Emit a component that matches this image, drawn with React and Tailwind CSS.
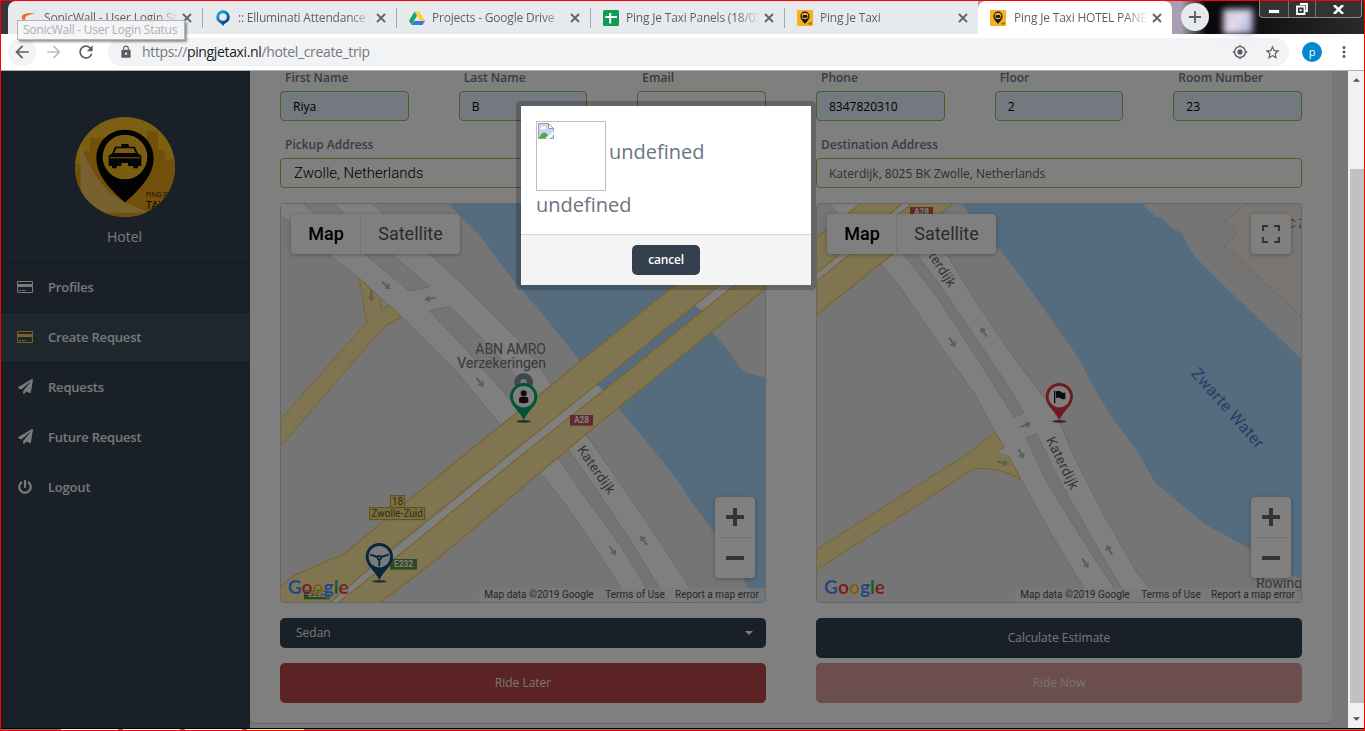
import React from "react";
import { FaPaperPlane, FaPowerOff } from "react-icons/fa";
import { MdLock, MdGpsFixed, MdStarBorder, MdMoreVert, MdArrowBack, MdArrowForward, MdRefresh } from "react-icons/md";

/* ---------- browser chrome ---------- */

function TaxiFavicon() {
  return (
    <svg viewBox="0 0 16 16" className="size-4 shrink-0">
      <rect width="16" height="16" rx="1" fill="#f4b223" />
      <path d="M8 1.6a4.6 4.6 0 0 0-4.6 4.6C3.400 9.500 8 13.800 8 13.800s4.600-4.300 4.600-7.600A4.600 4.600 0 0 0 8 1.600z" fill="#161616" />
      <circle cx="8" cy="6" r="3.300" fill="#f4b223" />
      <path d="M5.600 6.600l.7-1.600h3.400l.7 1.600v1.200H5.600z" fill="#161616" />
      <path d="M11.500 12.500h3.500v2h-3.500z" fill="#a8700d" />
    </svg>
  );
}

function SonicIcon() {
  return (
    <svg viewBox="0 0 16 16" className="size-4 shrink-0">
      <path d="M14.500 3.600C8.500 2.300 1 3.400.6 7c-.2 2.200 2.600 4 5 5-1.500-1.800-2-3.500-.9-4.900C6.200 5.200 10.500 4 14.500 3.600z" fill="#f3702a" />
    </svg>
  );
}

function BulbIcon() {
  return (
    <svg viewBox="0 0 16 16" className="size-4 shrink-0">
      <defs>
        <linearGradient id="bulb" x1="0" y1="0" x2="1" y2="1">
          <stop offset="0" stopColor="#19b3e6" />
          <stop offset="1" stopColor="#0b3f8f" />
        </linearGradient>
      </defs>
      <circle cx="8" cy="7" r="5.300" fill="none" stroke="url(#bulb)" strokeWidth="3" />
      <path d="M5 11.500h6L8 16z" fill="#0f4a9b" />
    </svg>
  );
}

function DriveIcon() {
  return (
    <svg viewBox="0 0 16 16" className="size-4 shrink-0">
      <path d="M5.500 1.500h5L16 11h-5.100z" fill="#ffcf48" />
      <path d="M5.500 1.500L0 11l2.600 4L8 5.700z" fill="#11a861" />
      <path d="M5.200 11H16l-2.600 4H2.600z" fill="#3777e3" />
    </svg>
  );
}

function SheetsIcon() {
  return (
    <svg viewBox="0 0 16 16" className="size-4 shrink-0">
      <rect width="16" height="16" rx="1.500" fill="#0f9d58" />
      <path d="M6.200 3h2v3H14v2H8.200v5.500h-2V8H2.300V6h3.900z" fill="#fff" />
    </svg>
  );
}

function CloseX() {
  return (
    <svg viewBox="0 0 10 10" className="size-[10px] shrink-0">
      <path d="M1 1l8 8M9 1l-8 8" stroke="#5f6368" strokeWidth="1.800" />
    </svg>
  );
}

const tabs = [
  { title: "SonicWall - User Login Status", icon: <SonicIcon />, first: true },
  { title: ":: Elluminati Attendance Po", icon: <BulbIcon /> },
  { title: "Projects - Google Drive", icon: <DriveIcon /> },
  { title: "Ping Je Taxi Panels (18/02/19)", icon: <SheetsIcon /> },
  { title: "Ping Je Taxi", icon: <TaxiFavicon /> },
  { title: "Ping Je Taxi HOTEL PANEL", icon: <TaxiFavicon />, active: true },
];

function Tab({ tab }) {
  return (
    <div
      className={
        tab.active
          ? "flex h-full w-[194px] items-center rounded-t-lg bg-white"
          : "flex h-full w-[194px] items-center bg-[#e7eaed] first:rounded-tl-lg"
      }
    >
      <div className={tab.active || tab.first ? "h-5 w-px" : "h-5 w-px bg-[#a4a7ab]"} />
      <div className={tab.active ? "ml-[11px]" : "ml-3"}>{tab.icon}</div>
      <div className={tab.active
        ? "ml-2 w-[132px] overflow-hidden whitespace-nowrap bg-[linear-gradient(90deg,#5a5d61_84%,transparent_102%)] bg-clip-text text-[12px] leading-5 tracking-[-0.2px] text-transparent"
        : "ml-[7px] w-[132px] overflow-hidden whitespace-nowrap bg-[linear-gradient(90deg,#5a5d61_84%,transparent_102%)] bg-clip-text text-[12px] leading-5 tracking-[-0.2px] text-transparent"}>
        {tab.title}
      </div>
      <div className="ml-[6px]"><CloseX /></div>
    </div>
  );
}

function TabStrip() {
  return (
    <div className="flex h-[33px] bg-[linear-gradient(90deg,#35353a_0_20px,#a99fb4_30px,#a99fb4_1180px,#0b0b0d_1205px,#08080a_1220px,#2a2a2c_1363px)] pl-[7px] font-['Open_Sans',sans-serif]">
      {tabs.map((t) => <Tab key={t.title} tab={t} />)}
      <div className="ml-[9px] mt-[2px] flex size-[28px] items-center justify-center rounded-full bg-[#e7eaed]">
        <svg viewBox="0 0 12 12" className="size-3"><path d="M6 0v12M0 6h12" stroke="#5a5d61" strokeWidth="1.800" /></svg>
      </div>
      <div className="ml-[14px] mt-2 h-[25px] w-[30px] bg-[linear-gradient(120deg,#cfc5dd,#e4dcee_50%,#98a0cf)] blur-[3px]" />
      <div className="ml-auto mr-[2px] flex h-[17px] w-[103px] rounded-b border border-t-0 border-[#8b8b8b] bg-[#333]">
        <div className="flex w-[29px] items-center justify-center border-r border-[#777]"><div className="mt-1 h-[5px] w-[12px] border border-[#444] bg-white" /></div>
        <div className="flex w-[27px] items-center justify-center border-r border-[#777]">
          <svg viewBox="0 0 12 12" className="size-3"><path d="M4 1h7v7H9M1 3.500h7.500V11H1z" fill="none" stroke="#fff" strokeWidth="1.800" /><path d="M3.600 6.200h2v2h-2z" fill="#fff" /></svg>
        </div>
        <div className="flex flex-1 items-center justify-center">
          <svg viewBox="0 0 12 10" className="h-[9px] w-[11px]"><path d="M1 0l10 10M11 0L1 10" stroke="#fff" strokeWidth="2.800" /></svg>
        </div>
      </div>
    </div>
  );
}

function Toolbar() {
  return (
    <div className="flex h-9 items-center bg-white pl-[7px] pr-[11px] font-['Open_Sans',sans-serif]">
      <div className="flex size-[28px] items-center justify-center rounded-full bg-[#f1f3f4]"><MdArrowBack className="size-5 text-[#5a5d61]" /></div>
      <MdArrowForward className="ml-2 size-5 text-[#bcbec0]" />
      <MdRefresh className="ml-3 size-5 text-[#5a5d61]" />
      <div className="ml-[12px] flex h-7 w-[1181px] items-center rounded-full bg-[#f1f3f4] pl-[11px] pr-2">
        <MdLock className="size-[14px] text-[#5a5d61]" />
        <div className="ml-[9px] text-[14px] leading-5 tracking-[-0.35px] text-[#75797e]">
          https://<span className="text-[#202124]">pingjetaxi.nl</span>/hotel_create_trip
        </div>
        <MdGpsFixed className="ml-auto size-4 text-[#5a5d61]" />
        <MdStarBorder className="ml-4 size-[17px] text-[#5a5d61]" />
      </div>
      <div className="ml-[13px] flex size-5 items-center justify-center rounded-full bg-[#0288d1] pb-px text-[11px] leading-none text-white">p</div>
      <MdMoreVert className="ml-auto size-[18px] text-[#5a5d61]" />
    </div>
  );
}

/* ---------- sidebar ---------- */

function CardIcon() {
  return (
    <svg viewBox="0 0 16 12" className="h-3 w-4">
      <path d="M.5.500h15v11H.5z" fill="none" stroke="currentColor" />
      <path d="M1 3h14v3H1zM2 9h2v1H2zM5 9h3.500v1H5z" fill="currentColor" />
    </svg>
  );
}

function Avatar() {
  return (
    <svg viewBox="225 141 300 300" className="mx-auto size-[100px] shrink-0">
      <defs><clipPath id="avatar"><circle cx="375" cy="291" r="150" /></clipPath></defs>
      <g clipPath="url(#avatar)">
        <path d="M225 141h300v300H225z" fill="#fbbf24" />
        <path d="M225 282h18v-40h27v-38h60v50h110v-70h34v57h21v27h35v173H225z" fill="#e2a018" />
        <path d="M375 179c-48 0-86 38-86 86 0 58 56 105 86 133 30-28 86-75 86-133 0-48-38-86-86-86z" fill="#050505" />
        <circle cx="375" cy="261" r="67" fill="#f4ba20" />
        <path d="M364 222h22v8h19l8 20 11 7v31h-10v7h-14v-7h-50v7h-14v-7h-10v-31l11-7 8-20h19z" fill="#0a0a0a" />
        <path d="M349 235h52l6 14h-64z" fill="#f4ba20" />
        <path d="M330 262h90v3h-90zM364 279h20v10h-20z" fill="#f4ba20" />
        <path d="M242 220c28 90 80 150 120 170l85 38H242z" fill="#fff2c0" opacity=".42" />
        <text x="437" y="381" fontSize="21" fontFamily="Open Sans" fill="#1a1408" textLength="68" lengthAdjust="spacingAndGlyphs">PING JE</text>
        <text x="437" y="416" fontSize="34" fontFamily="Open Sans" fill="#0d0a04" textLength="66">TAXI</text>
      </g>
    </svg>
  );
}

const nav = [
  { label: "Profiles", icon: <CardIcon /> },
  { label: "Create Request", icon: <CardIcon />, active: true },
  { label: "Requests", icon: <FaPaperPlane className="size-[15px]" /> },
  { label: "Future Request", icon: <FaPaperPlane className="size-[15px]" /> },
  { label: "Logout", icon: <FaPowerOff className="size-[14px]" /> },
];

function Sidebar() {
  return (
    <div className="flex w-[249px] shrink-0 flex-col bg-[#34404e]">
      <div className="h-[31px] shrink-0 border-b border-[#303b48]" />
      <div className="flex h-[161px] shrink-0 flex-col border-b border-[#28323d] pr-[2px] pt-[15px]">
        <Avatar />
        <div className="mt-[10px] text-center text-[14px] leading-5 text-[#f4f4f4]">Hotel</div>
      </div>
      {nav.map((n) => (
        <div
          key={n.label}
          className={
            n.active
              ? "flex h-[50px] shrink-0 items-center border-b border-[#2b3541] bg-[#3f4f5d] pb-[2px] pl-4"
              : "flex h-[50px] shrink-0 items-center border-b border-[#303b48] pb-[2px] pl-4"
          }
        >
          <div className={n.active ? "flex w-4 justify-center text-[#f9c440]" : "flex w-4 justify-center text-[#f4f4f4]"}>{n.icon}</div>
          <div className="ml-[15px] text-[13px] font-semibold leading-5 tracking-[-0.2px] text-[#f0f0f0]">{n.label}</div>
        </div>
      ))}
    </div>
  );
}

/* ---------- map drawings ---------- */

const EDGE = "#d4d4d4";
const GOLD = "#f3c65c";
const YELLOW = "#ffeaa1";
const WATER = "#aad9fd";

function Arrow({ x, y, r, c = "#b6bac6" }) {
  return <path d="M-17 -3H2V-11L17 0L2 11V3H-17z" fill={c} transform={`translate(${x} ${y}) rotate(${r})`} />;
}

function Shield({ x, y, w, h = 32, text, fill, color = "#fff", size = 25, stroke }) {
  return (
    <g>
      <rect x={x} y={y} width={w} height={h} fill={fill} stroke={stroke} strokeWidth="3" />
      <text x={x + w / 2} y={y + h / 2 + size * 0.36} fontSize={size} fontWeight={stroke ? 400 : 700} textAnchor="middle" fill={color}>{text}</text>
    </g>
  );
}

function Pin({ x, y, color, inner = "#fff", children }) {
  return (
    <g transform={`translate(${x} ${y})`}>
      <ellipse cx="0" cy="74" rx="22" ry="4" fill="#555" />
      <path d="M0-41a41 41 0 0 0-41 41C-41 27-12 42 0 70 12 42 41 27 41 0A41 41 0 0 0 0-41z" fill={color} />
      <circle r="32" fill={inner} />
      {children}
    </g>
  );
}

function GoogleMark({ x }) {
  return (
    <text x={x} y="1197" fontFamily="Lato" fontSize="58" fontWeight="700" stroke="#fff" strokeWidth="3" paintOrder="stroke" textLength="183" lengthAdjust="spacingAndGlyphs">
      <tspan fill="#4a8cff">G</tspan><tspan fill="#f5402e">o</tspan><tspan fill="#ffc107">o</tspan><tspan fill="#4a8cff">g</tspan><tspan fill="#30b455">l</tspan><tspan fill="#f5402e">e</tspan>
    </text>
  );
}

function StreetLabel({ x, y, r, len, children, size = 41, fill = "#6c6c6c" }) {
  return (
    <text transform={`translate(${x} ${y}) rotate(${r})`} fontSize={size} fill={fill} textLength={len}>{children}</text>
  );
}

function PickupMap() {
  return (
    <svg viewBox="33 27 1452 1194" className="h-[398px] w-[484px]" fontFamily="Roboto">
      <path d="M33 27h1452v1194H33z" fill="#ebebeb" />
      <path d="M538 27L640 135L705 225L840 385L932 500L985 570L1045 638L1130 740L1215 845L1275 935L1335 1018L1390 1100L1435 1180L1460 1221H1485V547Q1440 537 1425 530Q1412 522 1405 510L1370 460L1325 410L1270 340L1200 250V27z" fill={WATER} />
      <g stroke={EDGE} strokeWidth="3">
        <path d="M20 50L62 85L175 178L268 250L395 367L560 530L695 695L810 835L865 900L960 1035L1085 1230H1296L1260 1180L1150 1010L1040 850L950 720L900 650L845 570Q790 480 740 430L580 270L480 178L300 20H20z" fill="#fff" />
        <path d="M90 18L285 178L418 288L480 275L365 178L180 18z" fill="#ebebeb" />
        <path d="M478 347L590 465L700 590L865 790L920 870L1050 1050L1160 1230H1200L1090 1050L950 840L895 765L800 640Q760 560 640 435L540 334z" fill="#e9e9e9" />
      </g>
      <path d="M268 250L330 308L335 348L358 330L395 367Q345 390 330 408L25 762V681L290 382z" fill={YELLOW} stroke={GOLD} strokeWidth="3" />
      <path d="M1380 245L180 1221H215L1430 245z" fill="#fff" />
      <path d="M1005 590L1300 350L1270 328L975 565z" fill={WATER} />
      <g fill={YELLOW} stroke={GOLD} strokeWidth="3.500">
        <path d="M1240 250L1110 355L930 500L845 570L600 765L405 925L225 1075L75 1140L20 1185V1240H160L380 1050L750 753L985 565L1380 245z" />
        <path d="M1520 255L1325 410L1045 638L945 720L700 925L505 1090L320 1230H195L380 1085L750 784L1010 579L1290 354L1420 250z" />
      </g>
      <g>
        <Arrow x={348} y={271} r={42} /><Arrow x={304} y={303} r={90} c="#c3b98f" /><Arrow x={480} y={311} r={172} />
        <Arrow x={630} y={562} r={50} /><Arrow x={1028} y={1067} r={55} /><Arrow x={1121} y={1036} r={235} />
      </g>
      <g fontSize="42" fill="#6b7683" textAnchor="end" stroke="#efefef" strokeWidth="5" paintOrder="stroke">
        <text x="828" y="478" textLength="212">ABN AMRO</text>
        <text x="828" y="519" textLength="266">Verzekeringen</text>
      </g>
      <circle cx="761" cy="562" r="28" fill="#78909c" /><circle cx="761" cy="562" r="10" fill="#e9edef" />
      <StreetLabel x={920} y={764} r={55} len={166}>Katerdijk</StreetLabel>
      <Shield x={900} y={660} w={69} text="A28" fill="#cb5158" />
      <Shield x={360} y={1092} w={81} text="E232" fill="#5b9440" />
      <Shield x={361} y={902} w={43} h={35} text="18" fill="#f7df7a" color="#5d5636" size={30} stroke="#b89c34" />
      <Shield x={299} y={938} w={165} h={36} text="Zwolle-Zuid" fill="#f7df7a" color="#5d5636" size={30} stroke="#b89c34" />
      <Pin x={761} y={605} color="#00a870">
        <circle cy="-10" r="9" fill="#14141e" /><path d="M-14 17V9Q-14 0-6 0H6Q14 0 14 9V17Q0 23-14 17z" fill="#14141e" />
      </Pin>
      <Pin x={328} y={1085} color="#124e70" inner="#f4f6f8">
        <path d="M-28-6L-5 1M28-6L5 1M0 3V29" fill="none" stroke="#124e70" strokeWidth="5.500" />
        <circle cy="3" r="8" fill="#124e70" /><circle cy="3" r="2.500" fill="#fff" />
      </Pin>
      <Shield x={102} y={1185} w={78} h={28} text="E232" fill="#5b9440" size={23} />
      <GoogleMark x={53} />
    </svg>
  );
}

function DestinationMap() {
  return (
    <svg viewBox="36 27 1452 1194" className="h-[398px] w-[484px]" fontFamily="Roboto">
      <path d="M36 27h1452v1194H36z" fill="#ebebeb" />
      <path d="M1325 27L1258 77L1295 115L1258 152L1500 376V20z" fill="#f4ebe2" stroke="#efc7a3" strokeWidth="3" />
      <path d="M470 27L500 65L573 150L640 235L740 375L820 490L870 585L925 675L995 765L1045 855Q1055 870 1070 880L1200 988L1340 1065L1460 1140L1488 1152V490L1360 370L1260 275L1170 185L1150 155Q1140 125 1125 112L1100 98L1068 67L1052 65L1012 27z" fill={WATER} />
      <g stroke={EDGE} strokeWidth="3">
        <path d="M70 20L98 57L228 208L278 267L390 430L510 600L570 710L648 853L740 1020L867 1230H1077L1055 1200Q1010 1160 980 1105L905 975L800 770Q770 690 740 640L600 450L500 300L425 178L320 20z" fill="#fff" />
        <path d="M180 20L295 178L400 310L510 480L580 590L628 668L657 653L600 560L500 410L390 250L335 178L230 20z" fill="#e9e9e9" />
        <path d="M663 728L695 716L760 850L850 1010L950 1180L980 1230H950L925 1175L830 1030L720 850z" fill="#e9e9e9" />
      </g>
      <path d="M570 712L598 757L575 772L610 782L648 853Q580 815 508 821L26 1130V1069L490 775z" fill={YELLOW} stroke={GOLD} strokeWidth="3" />
      <path d="M600 757L577 772L612 783z" fill="#fff" />
      <path d="M310 10L20 244V275L345 10z" fill="#fff" />
      <g fill={YELLOW} stroke={GOLD} strokeWidth="3.500">
        <path d="M187 10L20 140V246L311 10z" /><path d="M339 10L20 271V371L262 178L462 10z" />
      </g>
      <Shield x={315} y={36} w={69} text="A28" fill="#cb5158" />
      <g>
        <Arrow x={442} y={442} r={55} /><Arrow x={536} y={411} r={235} /><Arrow x={662} y={690} r={-22} />
        <Arrow x={648} y={776} r={62} /><Arrow x={594} y={803} r={10} c="#c3b98f" /><Arrow x={841} y={1105} r={58} /><Arrow x={913} y={1065} r={238} />
      </g>
      <StreetLabel x={342} y={140} r={57} len={166}>Katerdijk</StreetLabel>
      <StreetLabel x={722} y={734} r={63.500} len={170}>Katerdijk</StreetLabel>
      <StreetLabel x={1156} y={537} r={48.500} len={302} size={49} fill="#4a7fc8">Zwarte Water</StreetLabel>
      <Pin x={763} y={605} color="#e03440">
        <path d="M-16-18h4v38h-4zM-10-16Q0-20 6-13Q12-10 18-13V6Q8 10 2 4Q-4 1-10 4z" fill="#14141e" />
      </Pin>
      <text x="1448" y="98" fontSize="36" fill="#6f7885">C Z</text>
      <text x="1353" y="1180" fontSize="42" fill="#6b7683" textLength="138">Rowing</text>
      <text x="1353" y="1211" fontSize="36" fill="#b8bfc8">Zwolse S</text>
      <GoogleMark x={57} />
    </svg>
  );
}

function MapPanel({ children, fullscreen }) {
  return (
    <div className="relative mt-[15px] h-[400px] overflow-hidden rounded border border-[#ccc]">
      {children}
      <div className="absolute left-[10px] top-[10px] flex h-10 rounded-sm bg-white font-['Roboto',sans-serif] text-[18px] leading-10 shadow-[0_1px_4px_rgba(0,0,0,0.300)]">
        <div className="w-[70px] border-r border-[#e4e4e4] pl-px text-center font-medium text-black">Map</div>
        <div className="w-[99px] text-center text-[#565656]">Satellite</div>
      </div>
      {fullscreen && (
        <div className="absolute right-[10px] top-[10px] flex size-10 items-center justify-center rounded-sm bg-white shadow-[0_1px_4px_rgba(0,0,0,0.300)]">
          <svg viewBox="0 0 18 18" className="size-[18px]"><path d="M1 6V1h5M12 1h5v5M17 12v5h-5M6 17H1v-5" fill="none" stroke="#666" strokeWidth="2.200" /></svg>
        </div>
      )}
      <div className="absolute right-[10px] top-[293px] flex h-[81px] w-10 flex-col items-center rounded-sm bg-white shadow-[0_1px_4px_rgba(0,0,0,0.300)]">
        <div className="flex h-10 items-center"><svg viewBox="0 0 18 18" className="size-[18px]"><path d="M0 9h18M9 0v18" stroke="#666" strokeWidth="4" /></svg></div>
        <div className="h-px w-[30px] bg-[#e0e0e0]" />
        <div className="flex h-10 items-center"><svg viewBox="0 0 18 18" className="size-[18px]"><path d="M0 9h18" stroke="#666" strokeWidth="4" /></svg></div>
      </div>
      <div className="absolute bottom-0 right-0 flex h-[14px] gap-px whitespace-nowrap font-['Roboto',sans-serif] text-[10px] leading-[14px] tracking-[0.020px] text-[#505050]">
        <div className="w-[120px] bg-[#f5f5f5]/70 text-center">Map data ©2019 Google</div>
        <div className="w-[70px] bg-[#f5f5f5]/70 text-center">Terms of Use</div>
        <div className="w-[94px] bg-[#f5f5f5]/70 pl-[4px]">Report a map error</div>
      </div>
    </div>
  );
}

/* ---------- form ---------- */

function SmallField({ label, value }) {
  return (
    <div className="min-w-0">
      <div className="h-5 pl-[5px] text-[12px] font-semibold leading-[13px] text-[#717780]">{label}</div>
      <div className={value ? "h-[30px] rounded border border-[#8cc152] bg-[#e8f0fe] px-3 text-[12px] leading-[29px] text-black" : "h-[30px] rounded border border-[#8cc152] bg-white"}>
        {value}
      </div>
    </div>
  );
}

function AddressField({ label, children }) {
  return (
    <div>
      <div className="h-[37px] pl-[5px] pt-[15px] text-[12px] font-semibold leading-[18px] text-[#717780]">{label}</div>
      <div className="h-[30px] rounded border border-[#8cc152] bg-white">{children}</div>
    </div>
  );
}

function RequestForm() {
  return (
    <div className="flex h-[653px] w-[1082px] gap-[50px] rounded-b-md border-b border-[#cfcfcf] bg-white px-[30px]">
      <div className="w-[486px]">
        <div className="grid grid-cols-3 gap-[50px]">
          <SmallField label="First Name" value="Riya" />
          <SmallField label="Last Name" value="B" />
          <SmallField label="Email" />
        </div>
        <AddressField label="Pickup Address">
          <div className="pl-[13px] font-['Roboto',sans-serif] text-[15px] font-light leading-[28px] text-black">Zwolle, Netherlands</div>
        </AddressField>
        <MapPanel><PickupMap /></MapPanel>
        <div className="mt-[15px] flex h-[30px] items-center rounded-[5px] bg-[#34404e] pl-4 pr-[13px] text-[12px] text-[#eee]">
          Sedan
          <svg viewBox="0 0 8 4" className="ml-auto h-1 w-2"><path d="M0 0h8L4 4z" fill="#fff" /></svg>
        </div>
        <div className="mt-[15px] flex h-10 items-center justify-center rounded-[5px] bg-[#b64646] text-[12px] text-[#eee]">Ride Later</div>
      </div>
      <div className="w-[486px]">
        <div className="grid grid-cols-3 gap-[50px]">
          <SmallField label="Phone" value="8347820310" />
          <SmallField label="Floor" value="2" />
          <SmallField label="Room Number" value="23" />
        </div>
        <AddressField label="Destination Address">
          <div className="px-3 text-[12px] leading-[29px] text-[#606060]">Katerdijk, 8025 BK Zwolle, Netherlands</div>
        </AddressField>
        <MapPanel fullscreen><DestinationMap /></MapPanel>
        <div className="mt-[15px] flex h-10 items-center justify-center rounded-[5px] bg-[#34404e] text-[12px] text-[#eee]">Calculate Estimate</div>
        <div className="mt-[5px] flex h-10 items-center justify-center rounded-[5px] bg-[#da9c9c] text-[12px] text-[#f4e6e6]">Ride Now</div>
      </div>
    </div>
  );
}

function BrokenImage() {
  return (
    <div className="h-[70px] w-[70px] shrink-0 border border-[#bdbdbd] p-px">
      <svg viewBox="0 0 16 16" className="size-4">
        <path d="M.5.500h10l5 5v10H.5z" fill="#c6d8f4" stroke="#9a9a9a" />
        <path d="M2 6q1-3 3-2q2-2 3 1v1z" fill="#fff" />
        <path d="M1 15q4-9 9-3l-3 3z" fill="#58a83a" />
        <path d="M10.500.500v5h5z" fill="#fff" stroke="#9a9a9a" />
        <path d="M8 16l8-8v3l-5 5z" fill="#fff" />
      </svg>
    </div>
  );
}

function Dialog() {
  return (
    <div className="absolute left-[515px] top-[30px] w-[300px] rounded bg-black/20 p-[5px]">
      <div className="h-[128px] bg-white px-[15px] pt-[15px] text-[20px] text-[#6c7482]">
        <div className="flex h-[70px]">
          <BrokenImage />
          <div className="ml-[3px] pt-[17px] leading-[28px]">undefined</div>
        </div>
        <div className="leading-[28px]">undefined</div>
      </div>
      <div className="flex h-[51px] items-center justify-center border-t border-[#d5d5d5] bg-[#f4f4f4]">
        <div className="flex h-[30px] w-[68px] items-center justify-center rounded-[5px] bg-[#34404e] text-[12px] font-semibold tracking-[-0.2px] text-white">cancel</div>
      </div>
    </div>
  );
}

function Scrollbar() {
  return (
    <div className="flex w-4 shrink-0 flex-col bg-[#f1f1f1]">
      <div className="flex h-[17px] items-center justify-center"><svg viewBox="0 0 8 4" className="h-1 w-[7px]"><path d="M0 4h8L4 0z" fill="#505050" /></svg></div>
      <div className="ml-[2px] mt-[81px] h-[534px] bg-[#c1c1c1]" />
      <div className="mt-auto flex h-[19px] items-center justify-center"><svg viewBox="0 0 8 4" className="h-1 w-[7px]"><path d="M0 0h8L4 4z" fill="#505050" /></svg></div>
    </div>
  );
}

export default function App() {
  return (
    <div className="relative flex h-[731px] w-[1365px] flex-col overflow-hidden border border-[#f00] bg-white">
      <TabStrip />
      <Toolbar />
      <div className="h-px shrink-0 bg-[#b0b0b0]" />
      <div className="relative flex h-[657px] shrink-0 overflow-hidden font-['Open_Sans',sans-serif]">
        <Sidebar />
        <div className="min-w-0 flex-1 bg-[#efefef]"><RequestForm /></div>
        <Scrollbar />
        <div className="absolute inset-y-0 left-0 right-4 bg-black/50" />
        <Dialog />
      </div>
      <div className="h-px shrink-0 bg-black" />
      <div className="flex h-px shrink-0 bg-[#777]">
        <div className="ml-[60px] w-[57px] bg-white" /><div className="ml-[5px] w-[57px] bg-white" />
        <div className="ml-[5px] w-[57px] bg-white" /><div className="ml-[5px] w-[57px] bg-[#fffbd0]" />
      </div>
      <div className="absolute left-4 top-[19px] h-[20px] w-[168px] border border-[#b5b5b5] bg-[#f4f5f6]/90 pl-[5px] font-['Open_Sans',sans-serif] text-[12px] leading-[18px] tracking-[-0.25px] text-[#aeb0b3] shadow-[2px_2px_2px_rgba(0,0,0,0.400)]">
        SonicWall - User Login Status
      </div>
    </div>
  );
}
